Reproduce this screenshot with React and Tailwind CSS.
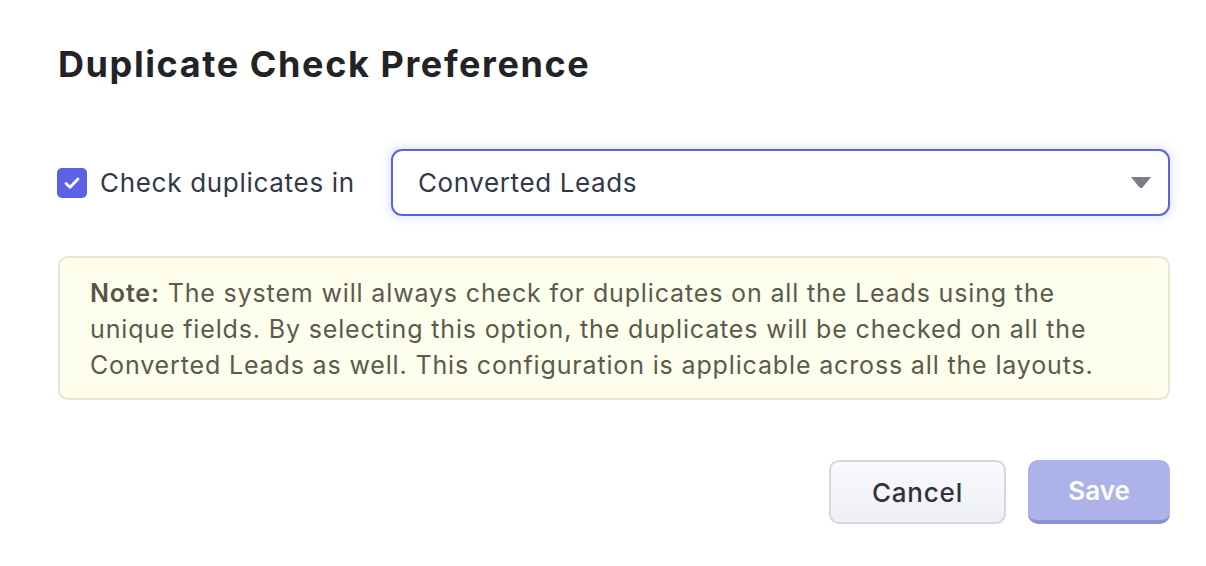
import React from "react";

const font = { fontFamily: "Inter, 'Noto Sans', sans-serif" };

function CheckBox() {
  return (
    <span className="flex h-[30px] w-[30px] items-center justify-center rounded-[5px] bg-[#5a63e8]">
      <svg width="20" height="20" viewBox="0 0 20 20" fill="none">
        <path d="M4 10.5l4 3.8 8-8.3" stroke="white" strokeWidth="2.8" strokeLinecap="round" strokeLinejoin="round" />
      </svg>
    </span>
  );
}

export default function App() {
  return (
    <div className="h-[566px] w-[1206px] bg-white text-[#2f3341]" style={font}>
      <div className="pl-[57px] pr-[36px] pt-[40px]">
        <h1 className="pl-px text-[36px] font-bold leading-[48px] tracking-[1.6px] text-[#222326]">
          Duplicate Check Preference
        </h1>

        <div className="mt-[61px] flex items-center">
          <label className="flex w-[334px] items-center gap-[13px]">
            <CheckBox />
            <span className="text-[26px] leading-[32px] tracking-[0.7px] text-[#333846]">Check duplicates in</span>
          </label>
          <div className="flex h-[67px] flex-1 items-center justify-between rounded-[11px] border-2 border-[#5a63e8] bg-white pl-[25px] pr-[17px] shadow-[0_0_8px_3px_rgba(90,99,232,0.15)]">
            <span className="text-[26px] leading-[32px] tracking-[0.6px] text-[#333846]">Converted Leads</span>
            <svg width="20" height="11" viewBox="0 0 20 11">
              <path d="M0 0h20l-8.5 10.5a2 2 0 0 1-3 0z" fill="#7b7c84" />
            </svg>
          </div>
        </div>

        <div className="ml-px mt-[40px] rounded-[10px] border-2 border-[#e9e5cd] bg-[#fefeed] px-[30px] pb-[15px] pt-[17px] text-[25px] leading-[36px] tracking-[0.85px] text-[#5b5a4e]">
          <span className="block">
            <b className="font-semibold text-[#55554a]">Note:</b> The system will always check for duplicates on all the Leads using the
          </span>
          <span className="block">unique fields. By selecting this option, the duplicates will be checked on all the</span>
          <span className="block">Converted Leads as well. This configuration is applicable across all the layouts.</span>
        </div>

        <div className="mt-[60px] flex justify-end gap-[22px]">
          <button className="h-[64px] w-[177px] rounded-[10px] border-2 border-[#d5d6e2] bg-gradient-to-b from-[#fafafd] to-[#eeeef6] text-[26px] font-medium tracking-[0.8px] text-[#2f3341]">
            Cancel
          </button>
          <button className="h-[64px] w-[142px] rounded-[10px] border-b-[4px] border-[#8a92d6] bg-[#adb3e9] text-[26px] font-semibold text-white">
            Save
          </button>
        </div>
      </div>
    </div>
  );
}
